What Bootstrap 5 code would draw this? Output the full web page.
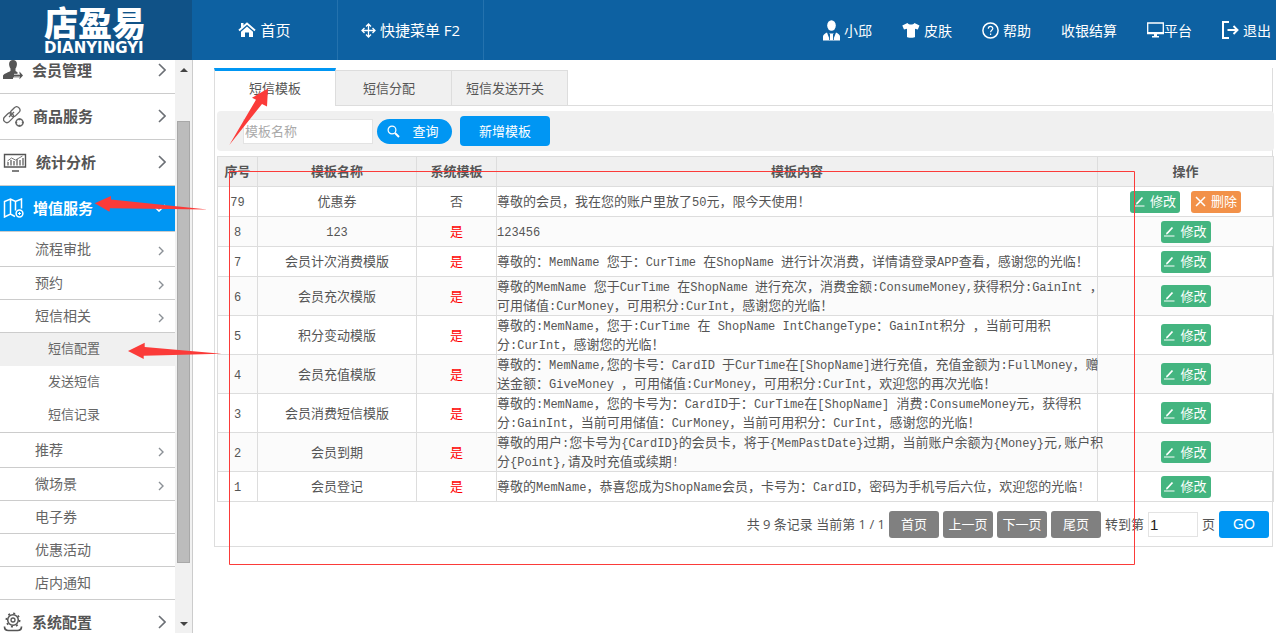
<!DOCTYPE html>
<html lang="zh-CN">
<head>
<meta charset="utf-8">
<meta name="viewport" content="width=device-width, initial-scale=1">
<title>短信模板 - 店盈易</title>
<link href="https://cdn.jsdelivr.net/npm/bootstrap@5.3.0/dist/css/bootstrap.min.css" rel="stylesheet">
<style>
body{font-family:"Open Sans","Noto Sans CJK SC",sans-serif;font-size:13px;line-height:19px;color:#555;background:#fff;overflow:hidden}
a{text-decoration:none;color:inherit}
.topbar{height:60px;background:#0d61a2;color:#fff}
.brand{width:192px;background:#105287;color:#fff;padding-left:44px;padding-top:6px}
.brand-cn{font-weight:900;font-size:34px;line-height:34px}
.brand-en{font-family:"DejaVu Sans",sans-serif;font-weight:700;font-size:15px;line-height:16px}
.top-main{width:146px;font-size:15px;border-right:1px solid #2472ae}
.top-tools{gap:30px;padding-right:5px;font-size:14px}
.gap-4px{gap:4px}
.shell{height:calc(100vh - 60px)}
.sidebar{width:193px;border-right:1px solid #ccc}
.menu{margin-top:-12px}
.menu-main{height:46px;border-bottom:1px solid #ccc;padding:0 9px 1px 3px;font-size:15px;font-weight:700;color:#555}
.menu-main svg:first-child{margin-right:9px}
.menu-main.current{background:#0096f3;color:#fff}
.menu-sub{height:33px;border-bottom:1px solid #ccc;padding:0 11px 2px 35px;font-size:14px;color:#666}
.menu-sub.group-start{height:35px}
.menu-sub svg{margin-top:5px}
.menu-leaf{height:33px;padding-left:48px;padding-bottom:2px;color:#666}
.menu-leaf.current{background:#f0f0f0}
.track{width:17px;background:#f1f1f1;padding:7px 2px 6px}
.thumb{height:442px;margin-top:49px;background:#bcbcbc;border:1px solid #a8a8a8}
.content{padding:8px 3px 0 21px}
.panel{border:solid #ddd;border-width:0 1px 1px;padding:5px 0 8px 2px}
.tabs{border-right:1px solid #ddd}
.tab{width:116px;height:36px;margin-top:2px;background:#f0f0f0;border:1px solid #ddd;border-left:0;color:#555;padding-right:9px}
.tab.current{width:122px;height:38px;margin-top:0;background:#fff;border-left:1px solid #ddd;border-top:3px solid #0096f3;border-bottom:0;padding:0}
.tab-rest{border-bottom:1px solid #ddd}
.filter{height:40px;margin:0 -2px 5px 0;padding-left:26px;background:#f0f0f0;border-radius:4px}
.field{border:1px solid #e3e3e3;border-radius:0;padding:0 1px;height:25px;font-size:13px;color:#222}
.field::placeholder{color:#aaa}
.name-field{width:130px}
.page-field{width:50px;font-family:"Liberation Sans",sans-serif;font-size:15px}
.act{border:0;padding:0;font-size:13px;line-height:19px;color:#fff;--bs-btn-color:#fff}
.search-btn{width:75px;height:25px;padding-right:3px;background:#0096f3;border-radius:13px;gap:12px}
.add-btn{width:90px;height:30px;margin-left:4px;background:#0096f3;border-radius:4px}
.row-btn{width:50px;height:22px;border-radius:3px;background:#44b580;gap:5px}
.row-btn.remove{background:#f29149}
.page-btn{width:50px;height:27px;border-radius:3px;background:#808080}
.go-btn{background:#0096f3;font-family:"Liberation Sans",sans-serif;font-size:14px}
.grid{width:calc(100% + 2px);table-layout:fixed;color:#555;border-color:#ddd;text-align:center}
.grid>:not(caption)>*>*{padding:0;height:30px;color:inherit;background:transparent;vertical-align:middle}
.grid thead tr{background:#f0f0f0}
.grid tbody tr:nth-child(even){background:#fbfbfb}
.grid .msg{text-align:left;white-space:nowrap}
.grid .yes{color:#f00}
.c-no{width:40px}.c-name{width:159px}.c-sys{width:80px}.c-act{width:176px}
.tk{font-family:"Liberation Mono",monospace;font-size:12px;line-height:12px;white-space:pre}
.pager{margin:9px -2px 0 0;padding-right:5px;gap:4px}
.notes{position:absolute;left:0;top:0;pointer-events:none}
</style>
</head>
<body>
<svg class="d-none">
  <symbol id="big" viewBox="0 0 8 14"><path d="M1 1l6 6-6 6" fill="none" stroke="#6b6f75" stroke-width="1.6"/></symbol>
  <symbol id="small" viewBox="0 0 6 10"><path d="M1 1l4 4-4 4" fill="none" stroke="#8b9096" stroke-width="1.4"/></symbol>
  <symbol id="pen" viewBox="0 0 11 11"><path d="M3 7.500L8.500 1.500" stroke="#fff" stroke-width="1.800"/><path d="M2 8.500l.5-2L4 8z" fill="#fff"/><path d="M0 10h10.500" stroke="#fff"/></symbol>
</svg>

<header class="topbar d-flex">
  <a href="#" class="brand d-block flex-shrink-0"><div class="brand-cn">店盈易</div><div class="brand-en">DIANYINGYI</div></a>
  <nav class="d-flex flex-grow-1">
    <a href="#" class="top-main d-flex align-items-center justify-content-center gap-4px">
      <svg width="18" height="16" viewBox="0 0 18 16"><path d="M1 8.500L9 1.500l8 7" fill="none" stroke="#fff" stroke-width="1.900"/><path d="M3 1h2.500v3L3 6zM9 4.500l6 5.300V15h-4v-4.500H7V15H3V9.800z" fill="#fff"/></svg>首页</a>
    <a href="#" class="top-main d-flex align-items-center justify-content-center gap-4px">
      <svg width="15" height="15" viewBox="0 0 15 15"><path d="M7.500 1v13M1 7.500h13M5 3.500L7.500 1 10 3.500M5 11.500L7.500 14l2.500-2.500M3.500 5L1 7.500 3.500 10M11.500 5L14 7.500 11.500 10" fill="none" stroke="#fff" stroke-width="1.300"/></svg>快捷菜单 F2</a>
    <div class="top-tools d-flex align-items-center ms-auto">
      <a href="#" class="d-flex align-items-center gap-4px"><svg width="17" height="21" viewBox="0 0 17 21"><ellipse cx="8.500" cy="5.500" rx="4.300" ry="5.200" fill="#fff"/><path d="M0 20.500v-4c0-2 2-3 4-4l2.500 6.500.5-4-.8-1.500h4.600L10 15l.5 4 2.500-6.500c2 1 4 2 4 4v4z" fill="#fff"/><path d="M6.500 14v6M10.500 14v6" stroke="#0d61a2" stroke-width=".8"/></svg>小邱</a>
      <a href="#" class="d-flex align-items-center gap-4px"><svg width="18" height="15" viewBox="0 0 18 15"><path d="M5.500 0c1.500 2 5.500 2 7 0l5 2.500-1.700 4-2.800-.8V14c0 1-8 1-8 0V5.700l-3 .8-1.700-4z" fill="#fff"/></svg>皮肤</a>
      <a href="#" class="d-flex align-items-center gap-4px"><svg width="17" height="17" viewBox="0 0 17 17"><circle cx="8.500" cy="8.500" r="7.600" fill="none" stroke="#fff" stroke-width="1.500"/><path d="M6.300 6.700c0-3 4.500-3 4.500-.2 0 1.700-2.200 1.700-2.200 3.700M8.600 11.500v1.500" fill="none" stroke="#fff" stroke-width="1.200"/></svg>帮助</a>
      <a href="#">收银结算</a>
      <a href="#" class="d-flex align-items-center"><svg width="17" height="16" viewBox="0 0 17 16"><path d="M.7 1h15.600v10.500H.7z" fill="none" stroke="#fff" stroke-width="1.300"/><path d="M0 10h17v2H0zM7 12h3v2h2v1.500H5V14h2z" fill="#fff"/></svg>平台</a>
      <a href="#" class="d-flex align-items-center gap-4px"><svg width="17" height="18" viewBox="0 0 17 18"><path d="M7 1H1v16h6" fill="none" stroke="#fff" stroke-width="2"/><path d="M5.500 9h10M11.500 5l4 4-4 4" fill="none" stroke="#fff" stroke-width="1.900"/></svg>退出</a>
    </div>
  </nav>
</header>

<div class="shell d-flex">
  <aside class="sidebar d-flex flex-shrink-0 overflow-hidden">
    <nav class="menu flex-grow-1">
      <a href="#" class="menu-main d-flex align-items-center"><svg width="20" height="20" viewBox="0 0 20 20"><path d="M10 0c5 0 4.500 6 2.500 8.500v2.500l2 1.200V14h2v-2.500L20 15.500l-3.500 3.800V17.500H10V19H0v-3c0-2 4-3 7.500-5V8.500C5.500 6 5 0 10 0z" fill="#555"/><path d="M11 14.300h6M11 17h6" stroke="#fff" stroke-width=".8"/></svg>会员管理<svg class="ms-auto" width="8" height="14"><use href="#big"/></svg></a>
      <a href="#" class="menu-main d-flex align-items-center"><svg width="21" height="21" viewBox="0 0 21 21"><g fill="none" stroke="#666" stroke-width="1.300"><rect x="6.500" y="2.500" width="11" height="6.500" rx="3.200" transform="rotate(-45 12 5.700)"/><rect x="0" y="8.500" width="11" height="6.500" rx="3.200" transform="rotate(-45 5.500 11.700)"/><path d="M6 11l5-5"/><circle cx="16.500" cy="16.500" r="3.500" stroke-width="1.500"/></g><path d="M16.500 12.200v8.600M12.200 16.500h8.600" stroke="#666" stroke-width="1.500" stroke-dasharray="2 4.600"/></svg>商品服务<svg class="ms-auto" width="8" height="14"><use href="#big"/></svg></a>
      <a href="#" class="menu-main d-flex align-items-center"><svg width="24" height="20" viewBox="0 0 24 20"><path d="M1.500 2.500h21v12.500h-21z" fill="none" stroke="#555" stroke-width="1.400"/><path d="M5 13.500V10M8 13.500V8M11 13.500V9M14 13.500V7M17 13.500V8M20 13.500V6" stroke="#777" stroke-width="1.500"/><path d="M4.500 9l4-3 4 2 7-4" fill="none" stroke="#777"/><path d="M9 19h7" stroke="#555" stroke-width="1.500"/></svg>统计分析<svg class="ms-auto" width="8" height="14"><use href="#big"/></svg></a>
      <a href="#" class="menu-main current d-flex align-items-center"><svg width="21" height="20" viewBox="0 0 21 20"><path d="M12 18.500l-4.500-2.500L1.500 19V3.500l6-2.500 5 2.500 6-2.500v9.500M7.500 1v15M12.500 3.500v9" fill="none" stroke="#fff" stroke-width="1.500"/><circle cx="16.500" cy="15.500" r="3.400" fill="none" stroke="#fff" stroke-width="1.500"/><path d="M16.500 14v3M15 15.500h3" stroke="#fff"/></svg>增值服务<svg class="ms-auto" width="14" height="8" viewBox="0 0 14 8"><path d="M1 1l6 6 6-6" fill="none" stroke="#fff" stroke-width="1.600"/></svg></a>
      <a href="#" class="menu-sub group-start d-flex align-items-center">流程审批<svg class="ms-auto" width="6" height="10"><use href="#small"/></svg></a>
      <a href="#" class="menu-sub d-flex align-items-center">预约<svg class="ms-auto" width="6" height="10"><use href="#small"/></svg></a>
      <a href="#" class="menu-sub d-flex align-items-center">短信相关<svg class="ms-auto" width="6" height="10"><use href="#small"/></svg></a>
      <div class="border-bottom" style="--bs-border-color:#ccc">
        <a href="#" class="menu-leaf current d-flex align-items-center">短信配置</a>
        <a href="#" class="menu-leaf d-flex align-items-center">发送短信</a>
        <a href="#" class="menu-leaf d-flex align-items-center">短信记录</a>
      </div>
      <a href="#" class="menu-sub group-start d-flex align-items-center">推荐<svg class="ms-auto" width="6" height="10"><use href="#small"/></svg></a>
      <a href="#" class="menu-sub d-flex align-items-center">微场景<svg class="ms-auto" width="6" height="10"><use href="#small"/></svg></a>
      <a href="#" class="menu-sub d-flex align-items-center">电子券</a>
      <a href="#" class="menu-sub d-flex align-items-center">优惠活动</a>
      <a href="#" class="menu-sub d-flex align-items-center">店内通知</a>
      <a href="#" class="menu-main d-flex align-items-center"><svg width="20" height="20" viewBox="0 0 20 20"><g fill="none" stroke="#555"><circle cx="10" cy="8" r="5.300" stroke-width="1.500"/><circle cx="10" cy="8" r="2" stroke-width="1.300"/><circle cx="10" cy="8" r="6.700" stroke-width="1.600" stroke-dasharray="2 3.260"/><path d="M1.500 14.500c0 3 1.500 4 4 4h9c2.500 0 4-1 4-4" stroke-width="1.700"/></g></svg>系统配置<svg class="ms-auto" width="8" height="14"><use href="#big"/></svg></a>
    </nav>
    <div class="track d-flex flex-column">
      <svg class="mx-auto" width="8" height="5" viewBox="0 0 8 5"><path d="M0 5l4-4 4 4z" fill="#444"/></svg>
      <div class="thumb flex-shrink-0"></div>
      <svg class="mx-auto mt-auto" width="8" height="5" viewBox="0 0 8 5"><path d="M0 0l4 4 4-4z" fill="#444"/></svg>
    </div>
  </aside>

  <main class="content flex-grow-1">
    <div class="tabs d-flex">
      <a href="#" class="tab current d-flex align-items-center justify-content-center">短信模板</a>
      <a href="#" class="tab d-flex align-items-center justify-content-center">短信分配</a>
      <a href="#" class="tab d-flex align-items-center justify-content-center">短信发送开关</a>
      <div class="tab-rest flex-grow-1"></div>
    </div>
    <section class="panel">
      <form class="filter d-flex align-items-center gap-4px">
        <input class="field name-field" type="text" placeholder="模板名称" aria-label="模板名称">
        <button type="button" class="btn act search-btn d-flex align-items-center justify-content-center"><svg width="13" height="13" viewBox="0 0 13 13"><circle cx="5" cy="5" r="3.900" fill="none" stroke="#fff" stroke-width="1.200"/><path d="M8 8l4 4" stroke="#fff" stroke-width="2"/></svg>查询</button>
        <button type="button" class="btn act add-btn">新增模板</button>
      </form>
      <table class="table table-bordered grid mb-0">
        <colgroup><col class="c-no"><col class="c-name"><col class="c-sys"><col><col class="c-act"></colgroup>
        <thead><tr><th>序号</th><th>模板名称</th><th>系统模板</th><th>模板内容</th><th>操作</th></tr></thead>
        <tbody>
          <tr><td><span class="tk">79</span></td><td>优惠券</td><td>否</td><td class="msg">尊敬的会员，我在您的账户里放了<span class="tk">50</span>元，限今天使用！</td>
            <td><div class="d-flex justify-content-center" style="gap:11px"><button class="btn act row-btn d-flex align-items-center justify-content-center"><svg width="11" height="11"><use href="#pen"/></svg>修改</button><button class="btn act row-btn remove d-flex align-items-center justify-content-center"><svg width="11" height="11" viewBox="0 0 11 11"><path d="M1 1l9 9M10 1l-9 9" stroke="#fff" stroke-width="1.500"/></svg>删除</button></div></td></tr>
          <tr><td><span class="tk">8</span></td><td><span class="tk">123</span></td><td class="yes">是</td><td class="msg"><span class="tk">123456</span></td>
            <td><button class="btn act row-btn d-flex align-items-center justify-content-center mx-auto"><svg width="11" height="11"><use href="#pen"/></svg>修改</button></td></tr>
          <tr><td><span class="tk">7</span></td><td>会员计次消费模版</td><td class="yes">是</td><td class="msg">尊敬的：<span class="tk">MemName </span>您于：<span class="tk">CurTime </span>在<span class="tk">ShopName </span>进行计次消费，详情请登录<span class="tk">APP</span>查看，感谢您的光临！</td>
            <td><button class="btn act row-btn d-flex align-items-center justify-content-center mx-auto"><svg width="11" height="11"><use href="#pen"/></svg>修改</button></td></tr>
          <tr><td><span class="tk">6</span></td><td>会员充次模版</td><td class="yes">是</td><td class="msg">尊敬的<span class="tk">MemName </span>您于<span class="tk">CurTime </span>在<span class="tk">ShopName </span>进行充次，消费金额<span class="tk">:ConsumeMoney,</span>获得积分<span class="tk">:GainInt </span>，<br>可用储值<span class="tk">:CurMoney</span>，可用积分<span class="tk">:CurInt</span>，感谢您的光临！</td>
            <td><button class="btn act row-btn d-flex align-items-center justify-content-center mx-auto"><svg width="11" height="11"><use href="#pen"/></svg>修改</button></td></tr>
          <tr><td><span class="tk">5</span></td><td>积分变动模版</td><td class="yes">是</td><td class="msg">尊敬的<span class="tk">:MemName</span>，您于<span class="tk">:CurTime </span>在<span class="tk"> ShopName IntChangeType</span>：<span class="tk">GainInt</span>积分<span class="tk"> </span>，当前可用积<br>分<span class="tk">:CurInt</span>，感谢您的光临！</td>
            <td><button class="btn act row-btn d-flex align-items-center justify-content-center mx-auto"><svg width="11" height="11"><use href="#pen"/></svg>修改</button></td></tr>
          <tr><td><span class="tk">4</span></td><td>会员充值模版</td><td class="yes">是</td><td class="msg">尊敬的：<span class="tk">MemName,</span>您的卡号：<span class="tk">CardID </span>于<span class="tk">CurTime</span>在<span class="tk">[ShopName]</span>进行充值，充值金额为<span class="tk">:FullMoney</span>，赠<br>送金额：<span class="tk">GiveMoney </span>，可用储值<span class="tk">:CurMoney</span>，可用积分<span class="tk">:CurInt</span>，欢迎您的再次光临！</td>
            <td><button class="btn act row-btn d-flex align-items-center justify-content-center mx-auto"><svg width="11" height="11"><use href="#pen"/></svg>修改</button></td></tr>
          <tr><td><span class="tk">3</span></td><td>会员消费短信模版</td><td class="yes">是</td><td class="msg">尊敬的<span class="tk">:MemName</span>，您的卡号为：<span class="tk">CardID</span>于：<span class="tk">CurTime</span>在<span class="tk">[ShopName] </span>消费<span class="tk">:ConsumeMoney</span>元，获得积<br>分<span class="tk">:GainInt</span>，当前可用储值：<span class="tk">CurMoney</span>，当前可用积分：<span class="tk">CurInt</span>，感谢您的光临！</td>
            <td><button class="btn act row-btn d-flex align-items-center justify-content-center mx-auto"><svg width="11" height="11"><use href="#pen"/></svg>修改</button></td></tr>
          <tr><td><span class="tk">2</span></td><td>会员到期</td><td class="yes">是</td><td class="msg">尊敬的用户<span class="tk">:</span>您卡号为<span class="tk">{CardID}</span>的会员卡，将于<span class="tk">{MemPastDate}</span>过期，当前账户余额为<span class="tk">{Money}</span>元<span class="tk">,</span>账户积<br>分<span class="tk">{Point},</span>请及时充值或续期<span class="tk">!</span></td>
            <td><button class="btn act row-btn d-flex align-items-center justify-content-center mx-auto"><svg width="11" height="11"><use href="#pen"/></svg>修改</button></td></tr>
          <tr><td><span class="tk">1</span></td><td>会员登记</td><td class="yes">是</td><td class="msg">尊敬的<span class="tk">MemName</span>，恭喜您成为<span class="tk">ShopName</span>会员，卡号为：<span class="tk">CardID</span>，密码为手机号后六位，欢迎您的光临<span class="tk">!</span></td>
            <td><button class="btn act row-btn d-flex align-items-center justify-content-center mx-auto"><svg width="11" height="11"><use href="#pen"/></svg>修改</button></td></tr>
        </tbody>
      </table>
      <div class="pager d-flex align-items-center justify-content-end">
        <span>共 9 条记录 当前第 1 / 1</span>
        <button type="button" class="btn act page-btn">首页</button>
        <button type="button" class="btn act page-btn">上一页</button>
        <button type="button" class="btn act page-btn">下一页</button>
        <button type="button" class="btn act page-btn">尾页</button>
        <label for="page">转到第</label>
        <input id="page" class="field page-field" type="text" value="1">
        <span>页</span>
        <button type="button" class="btn act page-btn go-btn">GO</button>
      </div>
    </section>
  </main>
</div>

<!-- tutorial marks: three arrows and a frame round the list -->
<svg class="notes" width="1140" height="570" viewBox="0 0 1140 570">
  <path d="M229.500 171.500h905v393h-905z" fill="none" stroke="#fb3b39"/>
  <g fill="#fb3b39">
    <path d="M268 88.500L252 97.700l4 2L229.300 145 262 104l5 2.600z"/>
    <path d="M94.700 203.300L111 196v3.500l96.500 10-97.500-1.200-.5 3.400z"/>
    <path d="M128 351l16.700-8.300v4.300l77 6.700-78 2v3.300z"/>
  </g>
</svg>
<script src="https://cdn.jsdelivr.net/npm/bootstrap@5.3.0/dist/js/bootstrap.bundle.min.js"></script>
</body>
</html>
